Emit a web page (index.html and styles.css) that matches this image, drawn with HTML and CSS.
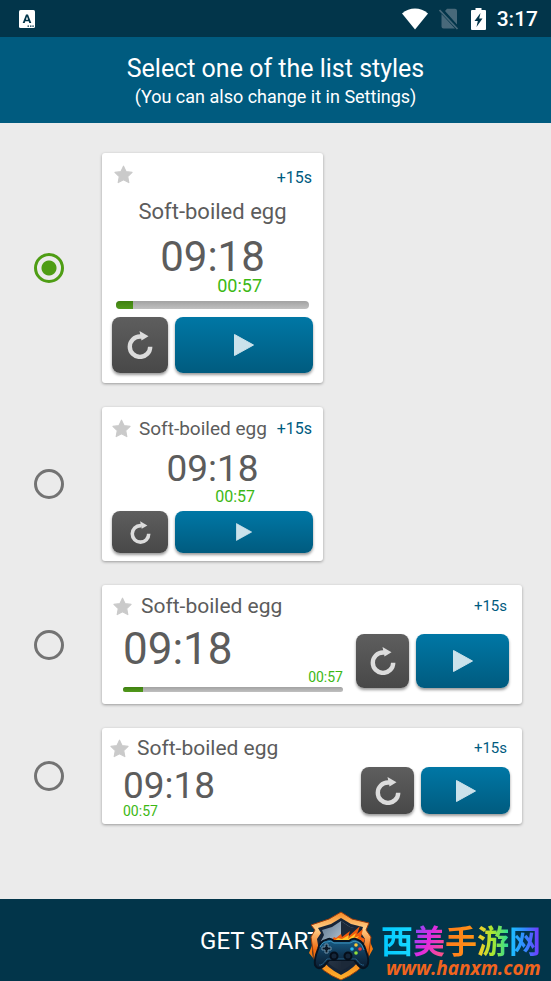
FILE: index.html
```html
<!DOCTYPE html>
<html lang="en">

<head>
  <meta charset="UTF-8">
  <meta name="viewport" content="width=device-width, initial-scale=1.0">
  <title>Select list style</title>
  <link rel="stylesheet" href="styles.css">
</head>

<body>
  <!-- shared icons -->
  <svg class="sprite" aria-hidden="true">
    <symbol id="star" viewBox="0 0 24 24">
      <path d="M12 1.500l3.300 6.900 7.500 1-5.500 5.200 1.400 7.600L12 18.500l-6.700 3.700 1.400-7.600L1.200 9.400l7.500-1z" stroke-width="1.500" stroke-linejoin="round" stroke="currentColor" fill="currentColor" />
    </symbol>
    <symbol id="reset" viewBox="0 0 26 28">
      <path d="M14 5.500H13A10.200 10.200 0 1 0 23.200 15.700" fill="none" stroke="currentColor" stroke-width="4.400" />
      <path d="M12.500 0L21.500 5.300 14.500 9.500z" fill="currentColor" />
    </symbol>
    <symbol id="play" viewBox="0 0 20 22">
      <path d="M0.500 0.500L19.500 11 0.500 21.500z" fill="currentColor" stroke="currentColor" stroke-linejoin="round" />
    </symbol>
  </svg>

  <div class="status">
    <svg class="status-app" viewBox="0 0 16 18" width="16" height="18">
      <rect width="16" height="18" rx="1.500" fill="#fff" />
      <path d="M3.700 13L7 4.500h2L12.300 13h-2l-.6-1.700H6.300L5.700 13zM6.900 9.700h2.200L8 6.600z" fill="#02354a" />
      <path d="M8.500 15.500h1.500v1.200H8.500zM11 15.500h1.500v1.200H11zM13.300 15.500h1.500v1.200h-1.500z" fill="#02354a" />
    </svg>
    <svg viewBox="0 0 26 22" width="26" height="22">
      <path d="M0 5.500C7.500-1.200 18.500-1.200 26 5.500L13 21.500z" fill="#fff" />
    </svg>
    <svg class="status-sim" viewBox="0 0 20 22" width="20" height="22">
      <path d="M6 3L8 .8H16q2 0 2 2v13.700zM2.500 6L16 20.500H4.500q-2 0-2-2z" fill="#48697a" />
      <path d="M.5 2L18.500 21" stroke="#48697a" stroke-width="1.700" />
    </svg>
    <svg viewBox="0 0 15 22" width="15" height="22">
      <path d="M4.500 0h6v2H14q1 0 1 1v18q0 1-1 1H1q-1 0-1-1V3q0-1 1-1h3.500z" fill="#fff" />
      <path d="M9.500 5L3.500 13h3.300L5.500 19l6-8.500H8.200z" fill="#02354a" />
    </svg>
    <span class="clock">3:17</span>
  </div>

  <header class="header">
    <h1>Select one of the list styles</h1>
    <p>(You can also change it in Settings)</p>
  </header>

  <main class="styles">
    <div class="row">
      <input type="radio" name="style" id="style1" checked>
      <div class="card card-large">
        <div class="top">
          <svg class="star"><use href="#star" /></svg>
          <a class="add" href="#">+15s</a>
        </div>
        <label class="name" for="style1">Soft-boiled egg</label>
        <div class="time">09:18</div>
        <div class="elapsed">00:57</div>
        <div class="bar"><span style="width: 9%"></span></div>
        <div class="buttons">
          <button class="reset" aria-label="Reset"><svg><use href="#reset" /></svg></button>
          <button class="play" aria-label="Play"><svg><use href="#play" /></svg></button>
        </div>
      </div>
    </div>

    <div class="row">
      <input type="radio" name="style" id="style2">
      <div class="card card-small">
        <div class="top">
          <svg class="star"><use href="#star" /></svg>
          <label class="name" for="style2">Soft-boiled egg</label>
          <a class="add" href="#">+15s</a>
        </div>
        <div class="time">09:18</div>
        <div class="elapsed">00:57</div>
        <div class="buttons">
          <button class="reset" aria-label="Reset"><svg><use href="#reset" /></svg></button>
          <button class="play" aria-label="Play"><svg><use href="#play" /></svg></button>
        </div>
      </div>
    </div>

    <div class="row">
      <input type="radio" name="style" id="style3">
      <div class="card card-wide">
        <div class="top">
          <svg class="star"><use href="#star" /></svg>
          <label class="name" for="style3">Soft-boiled egg</label>
          <a class="add" href="#">+15s</a>
        </div>
        <div class="body">
          <div class="info">
            <div class="time">09:18</div>
            <div class="elapsed">00:57</div>
            <div class="bar"><span style="width: 9%"></span></div>
          </div>
          <div class="buttons">
            <button class="reset" aria-label="Reset"><svg><use href="#reset" /></svg></button>
            <button class="play" aria-label="Play"><svg><use href="#play" /></svg></button>
          </div>
        </div>
      </div>
    </div>

    <div class="row">
      <input type="radio" name="style" id="style4">
      <div class="card card-wide card-flat">
        <div class="top">
          <svg class="star"><use href="#star" /></svg>
          <label class="name" for="style4">Soft-boiled egg</label>
          <a class="add" href="#">+15s</a>
        </div>
        <div class="body">
          <div class="info">
            <div class="time">09:18</div>
            <div class="elapsed">00:57</div>
          </div>
          <div class="buttons">
            <button class="reset" aria-label="Reset"><svg><use href="#reset" /></svg></button>
            <button class="play" aria-label="Play"><svg><use href="#play" /></svg></button>
          </div>
        </div>
      </div>
    </div>
  </main>

  <footer class="footer">
    <button class="start">GET STARTED</button>

    <div class="mark">
      <svg viewBox="0 0 64 70" width="64" height="70">
        <defs>
          <linearGradient id="gold" x1="0" y1="0" x2="0" y2="1">
            <stop offset="0" stop-color="#f58a24" />
            <stop offset=".25" stop-color="#ffd08a" />
            <stop offset=".55" stop-color="#f06a10" />
            <stop offset="1" stop-color="#ffb52e" />
          </linearGradient>
          <linearGradient id="steel" x1="0" y1="0" x2="1" y2="1">
            <stop offset="0" stop-color="#5c7690" />
            <stop offset=".4" stop-color="#a5b6c4" />
            <stop offset=".5" stop-color="#273444" />
            <stop offset="1" stop-color="#101c2c" />
          </linearGradient>
          <linearGradient id="pad" x1="0" y1="0" x2="0" y2="1">
            <stop offset="0" stop-color="#17618e" />
            <stop offset=".5" stop-color="#103754" />
            <stop offset="1" stop-color="#0a1c30" />
          </linearGradient>
        </defs>
        <path d="M4 32L0 42l4 5-1-7zM60 28l4 10-5 9 1-8z" fill="#f47a12" />
        <path d="M32 1L43 8 60 12 57 19 62 26 59 48Q51 61 32 69 12 61 5 48L2 26 6 19 2 14 20 8z" fill="url(#gold)" stroke="#9c3b0c" />
        <path d="M32 7L42 13 54 16 52 22 56 28 53 46Q46 57 32 64 18 57 11 46L8 28 12 22 9 17 22 13z" fill="#162538" />
        <path d="M32 10L41 16 50 18 49 24 52 30 50 45Q43 55 32 60 20 55 14 45L12 30 15 24 13 19 23 16z" fill="url(#steel)" />
        <path d="M32 10v50Q43 55 50 45L52 30 49 24 50 18 41 16z" fill="#1c2939" />
        <path d="M22 30l3-4 2 1 5-4 1 3 8-6-2 6 12-11-3 8 6-5-2 8 4 2-4 9H22z" fill="#f15a0c" />
        <path d="M25 30l4-3 4 1 7-4-1 4 8-6-2 5 5-2-5 6H26z" fill="#ffc52c" />
        <path d="M17 29Q21 26 25 30H40Q44 26 49 29 54 30 57 40 61 50 58 55 54 60 49 54L45 49H20L15 55Q9 60 6 54 5 48 9 38 11 30 17 29z" fill="url(#pad)" stroke="#071321" stroke-width="2" />
        <path d="M11 36Q14 30 18 31 22 29 25 32H41Q45 29 49 31 53 32 55 39" fill="none" stroke="#3c91ba" />
        <path d="M10 54Q13 55 18 48H47Q52 55 55 54" fill="none" stroke="#265f84" />
        <path d="M16 33h3v3h3v3h-3v3h-3v-3h-3v-3h3z" fill="#0a1827" stroke="#6c91a9" />
        <circle cx="25" cy="45" r="3.500" fill="#14263a" stroke="#060e19" stroke-width="2" />
        <circle cx="39" cy="45" r="3.500" fill="#14263a" stroke="#060e19" stroke-width="2" />
        <circle cx="47" cy="34" r="1.800" fill="#ffcc35" />
        <circle cx="43" cy="38" r="1.800" fill="#29b9ef" />
        <circle cx="51" cy="38" r="1.800" fill="#ef353d" />
        <circle cx="47" cy="42" r="1.800" fill="#92df3a" />
      </svg>
      <div class="mark-text">
        <div class="mark-name" lang="zh"><span>西</span><span>美</span><span>手</span><span>游</span><span>网</span></div>
        <div class="mark-url">www.hanxm.com</div>
      </div>
    </div>
  </footer>
</body>

</html>
```
FILE: styles.css
```css
* {
  box-sizing: border-box;
  padding: 0;
  margin: 0;
}

body {
  display: flex;
  flex-direction: column;
  min-height: 100vh;
  background: #ebebeb;
  color: #5c5c5c;
  font-family: Roboto, "Noto Sans CJK SC", sans-serif;
}

button {
  border: none;
  font-family: inherit;
}

a {
  text-decoration: none;
}

.sprite {
  display: none;
}

/* status bar */
.status {
  display: flex;
  align-items: center;
  height: 37px;
  padding: 0 13px 0 19px;
  background: #02354a;
  color: #fff;
}

.status-app {
  margin-right: auto;
}

.status-sim {
  margin: 0 12px 0 11px;
}

.clock {
  margin-left: 11px;
  font-size: 21px;
  font-weight: 500;
}

.header {
  height: 86px;
  padding-top: 17px;
  background: #005b7f;
  color: #fff;
  text-align: center;
}

.header h1 {
  font-size: 25px;
  font-weight: 400;
  line-height: 30px;
}

.header p {
  font-size: 18px;
  line-height: 26px;
}

/* list of styles */
.styles {
  display: flex;
  flex: 1;
  flex-direction: column;
  gap: 24px;
  padding: 30px 29px 24px 34px;
}

.row {
  display: flex;
  align-items: center;
  gap: 38px;
}

.row input {
  flex: none;
  width: 30px;
  height: 30px;
  border: 3px solid #737373;
  border-radius: 50%;
  appearance: none;
}

.row input:checked {
  border-color: #4e9d14;
  background: radial-gradient(circle, #4e9d14 7px, transparent 8px);
}

.card {
  width: 221px;
  padding: 10px;
  border-radius: 3px;
  background: #fff;
  box-shadow: 0 1px 3px rgba(0, 0, 0, .35);
}

.top {
  display: flex;
  align-items: center;
  height: 22px;
}

.star {
  width: 19px;
  height: 19px;
  color: #cacaca;
}

.add {
  margin-left: auto;
  color: #005b7f;
  font-size: 16px;
}

.name {
  white-space: nowrap;
}

.elapsed {
  color: #3cb814;
}

.bar {
  height: 8px;
  overflow: hidden;
  border-radius: 4px;
  background: linear-gradient(#a2a2a2, #c0c0c0);
}

.bar span {
  display: block;
  height: 100%;
  background: linear-gradient(#3f8010, #529a1c);
}

.buttons {
  display: flex;
  gap: 7px;
}

.buttons button {
  display: flex;
  align-items: center;
  justify-content: center;
  height: 56px;
  border-radius: 8px;
  box-shadow: 0 2px 3px rgba(0, 0, 0, .4);
}

.reset {
  width: 56px;
  background: linear-gradient(#5e5e5e, #484848);
  color: #dcdcdc;
}

.reset svg {
  width: 26px;
  height: 28px;
}

.play {
  flex: 1;
  background: linear-gradient(#0077a5, #005b7f);
  color: #cbe2eb;
}

.play svg {
  width: 20px;
  height: 22px;
}

/* large card */
.card-large {
  height: 230px;
  text-align: center;
}

.card-large .top {
  padding: 0 1px 0 2px;
}

.card-large .add {
  padding-top: 6px;
}

.card-large .name {
  display: block;
  margin-top: 13px;
  font-size: 22px;
  line-height: 28px;
}

.card-large .time {
  margin-top: 11px;
  font-size: 42px;
  line-height: 40px;
}

.card-large .elapsed {
  padding-right: 51px;
  font-size: 18px;
  line-height: 18px;
  text-align: right;
}

.card-large .bar {
  margin: 6px 4px 8px;
}

/* small card */
.card-small {
  height: 154px;
}

.card-small .top {
  padding-right: 1px;
}

.card-small .name {
  margin-left: 8px;
  font-size: 19px;
}

.card-small .time {
  margin-top: 11px;
  font-size: 37px;
  line-height: 38px;
  text-align: center;
}

.card-small .elapsed {
  padding-right: 58px;
  font-size: 16px;
  line-height: 18px;
  text-align: right;
}

.card-small .buttons {
  margin-top: 5px;
}

.card-small .buttons button {
  height: 42px;
}

.card-small .reset svg {
  width: 21px;
  height: 23px;
}

.card-small .play svg {
  width: 16px;
  height: 18px;
}

/* wide cards */
.card-wide {
  flex: 1;
  height: 119px;
  padding: 10px 13px 12px 11px;
}

.card-wide .top {
  padding-right: 2px;
}

.card-wide .name {
  margin-left: 9px;
  font-size: 21px;
}

.card-wide .add {
  font-size: 15px;
}

.body {
  display: flex;
  align-items: flex-end;
  gap: 13px;
}

.info {
  flex: 1;
  padding-left: 10px;
}

.card-wide .time {
  margin-top: 11px;
  font-size: 44px;
  line-height: 42px;
}

.card-wide .elapsed {
  font-size: 14px;
  line-height: 14px;
  text-align: right;
}

.card-wide .bar {
  height: 5px;
  margin-top: 3px;
}

.card-wide .buttons {
  padding-bottom: 4px;
}

.card-wide .buttons button {
  height: 54px;
}

.card-wide .reset {
  width: 53px;
}

.card-wide .play {
  flex: none;
  width: 93px;
}

.card-flat {
  height: 96px;
  padding: 9px 12px 6px 8px;
}

.card-flat .top {
  padding-right: 3px;
}

.card-flat .name {
  margin-left: 8px;
}

.card-flat .info {
  padding-left: 13px;
}

.card-flat .time {
  margin-top: 8px;
  font-size: 37px;
  line-height: 38px;
}

.card-flat .elapsed {
  line-height: 12px;
  text-align: left;
}

.card-flat .buttons {
  padding-bottom: 3px;
}

.card-flat .buttons button {
  height: 47px;
}

.card-flat .play {
  width: 89px;
}

/* footer */
.footer {
  position: relative;
  height: 82px;
  background: #02354a;
}

.start {
  width: 100%;
  height: 100%;
  padding-top: 2px;
  background: none;
  color: #fff;
  font-size: 24px;
}

.mark {
  position: absolute;
  right: 6px;
  bottom: 0;
  display: flex;
  gap: 8px;
}

.mark-text {
  width: 164px;
  padding-top: 9px;
}

.mark-name {
  display: flex;
  font-family: "Noto Sans CJK SC", sans-serif;
  font-size: 32px;
  font-weight: 700;
  line-height: 38px;
}

.mark-name span {
  background: linear-gradient(90deg, #00c8ff, #19d8ff);
  background-clip: text;
  color: transparent;
}

.mark-name span:nth-child(2) {
  background-image: linear-gradient(120deg, #6a52ff, #e02be0 50%, #ff5a78);
}

.mark-name span:nth-child(3) {
  background-image: linear-gradient(90deg, #ff7a1c, #ff9416);
}

.mark-name span:nth-child(4) {
  background-image: linear-gradient(90deg, #ffc928, #a6e832 50%, #24dc9c);
}

.mark-name span:nth-child(5) {
  background-image: linear-gradient(90deg, #18c8ff, #3388ff 50%, #7a2cff);
}

.mark-url {
  padding-left: 5px;
  color: #f0641e;
  font-family: "Open Sans", sans-serif;
  font-size: 19px;
  font-style: italic;
  font-weight: 700;
  line-height: 20px;
}
```
